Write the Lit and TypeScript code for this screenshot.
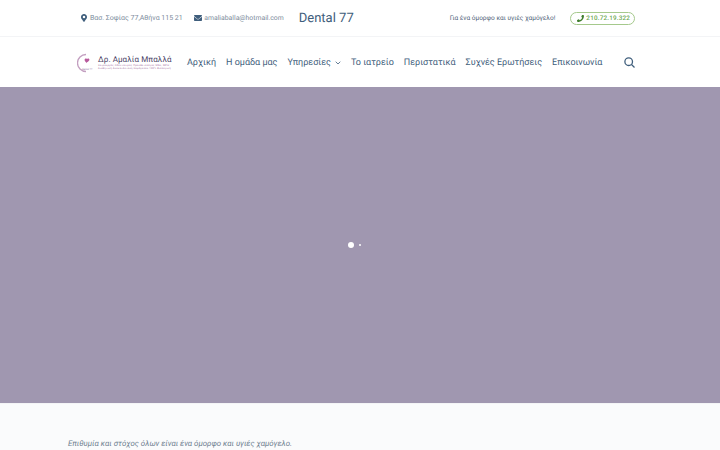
import { LitElement, html, css } from "lit";
import { customElement } from "lit/decorators.js";

@customElement("app-root")
export class AppRoot extends LitElement {
  static styles = css`
    :host { display: block; width: 720px; height: 450px; overflow: hidden; background: #fff; font-family: Roboto, "Noto Sans", sans-serif; color: #3f5e7c; text-rendering: geometricPrecision; }
    .top { height: 37px; box-sizing: border-box; border-bottom: 1px solid #f3f4f6; display: flex; align-items: center; padding: 0 85px 0 81px; }
    .info { display: flex; align-items: center; gap: 3px; font-size: 7px; color: #7d8c9c; white-space: nowrap; }
    .info svg { display: block; color: #3f5e7c; }
    .mail { margin-left: 11px; font-size: 6.85px; gap: 2.5px; }
    .brand { margin-left: 15px; font-size: 13px; color: #3f5e7c; white-space: nowrap; }
    .tagline { margin-left: auto; font-size: 6.5px; color: #4f6478; white-space: nowrap; }
    .phone { margin-left: 15px; display: flex; align-items: center; gap: 2px; height: 11px; padding: 0 4px 0 6px; border: 1px solid #a5c98c; border-radius: 7px; font-size: 6.3px; font-weight: 500; letter-spacing: 0.2px; color: #6aa84f; white-space: nowrap; }
    .nav { height: 50px; box-sizing: border-box; display: flex; align-items: center; padding: 1px 85px 0 77px; }
    .logo { display: flex; align-items: center; gap: 4px; width: 110px; flex: none; }
    .logo-text { display: flex; flex-direction: column; white-space: nowrap; }
    .logo-name { font-size: 8px; line-height: 9px; color: #4a3f66; letter-spacing: 0.1px; }
    .logo-sub { font-size: 2.5px; line-height: 3px; color: #a06a9c; letter-spacing: 0.25px; }
    .menu { display: flex; align-items: center; gap: 10px; font-size: 9px; letter-spacing: 0; white-space: nowrap; }
    .item { display: flex; align-items: center; gap: 4px; }
    .search { margin-left: auto; display: block; color: #3f5e7c; }
    .hero { height: 316px; background: #a097b0; display: flex; align-items: center; justify-content: center; gap: 5px; padding-right: 12px; }
    .dot-a { width: 6px; height: 6px; border-radius: 50%; background: #fff; }
    .dot-b { width: 2px; height: 2px; border-radius: 50%; background: #fff; }
    .below { height: 47px; background: #fafbfc; border-top: 1px solid #f3f4f6; box-sizing: border-box; padding: 30px 0 0 68px; font-size: 7.85px; font-style: italic; line-height: 20px; color: #6f7f90; white-space: nowrap; }
    .logo-caption { font-size: 2.5px; fill: #8a6a96; }
  `;

  render() {
    return html`
      <div class="top">
        <div class="info">
          <svg width="6" height="8" viewBox="0 0 384 512" fill="currentColor"><path d="M172 502C27 291 0 267 0 192 0 86 86 0 192 0s192 86 192 192c0 75-27 99-172 310a24 24 0 0 1-40 0zm20-230a80 80 0 1 0 0-160 80 80 0 0 0 0 160z"/></svg>
          <span>Βασ. Σοφίας 77,Αθήνα 115 21</span>
        </div>
        <div class="info mail">
          <svg width="8" height="6" viewBox="0 0 512 384" fill="currentColor"><path d="M48 0C21 0 0 21 0 48c0 15 7 29 19 38l218 164c11 8 27 8 38 0L493 86c12-9 19-23 19-38 0-27-21-48-48-48H48zM0 112v224c0 27 21 48 48 48h416c27 0 48-21 48-48V112L294 276c-23 17-53 17-76 0L0 112z"/></svg>
          <span>amaliaballa@hotmail.com</span>
        </div>
        <div class="brand">Dental 77</div>
        <div class="tagline">Για ένα όμορφο και υγιές χαμόγελο!</div>
        <div class="phone">
          <svg width="7" height="7" viewBox="0 0 512 512" fill="#3f7d2c"><path d="M493 24 389 0c-11-3-23 3-27 14l-48 112c-4 10-1 21 7 28l60 50c-36 77-99 140-178 178l-50-60c-7-8-18-11-28-7L14 363C3 367-3 379 0 390l24 104c2 10 12 18 23 18 256 0 465-208 465-465 0-11-8-21-19-23z"/></svg>
          <span>210.72.19.322</span>
        </div>
      </div>
      <div class="nav">
        <div class="logo">
          <svg width="17" height="20" viewBox="0 0 17 20" fill="none"><path d="M9 1.500A8.500 8.500 0 0 0 9 18.500" stroke="#c39fc0" stroke-width="1.300"/><path d="M10 10C7 8 7 5.500 9 5.500c.6 0 1 .4 1 .8 0-.4.400-.8 1-.8 2 0 2 2.500-1 3.700z" fill="#b85a9c"/><text class="logo-caption" x="5" y="16.500">dental 77</text></svg>
          <div class="logo-text">
            <span class="logo-name">Δρ. Αμαλία Μπαλλά</span>
            <span class="logo-sub">Χειρουργός Οδοντίατρος Προσθετολόγος MSc, MPH</span>
            <span class="logo-sub">Αισθητική Αποκατάσταση Χαμόγελου 100% Βιολογική</span>
          </div>
        </div>
        <div class="menu">
          <span>Αρχική</span>
          <span>Η ομάδα μας</span>
          <span class="item">Υπηρεσίες
            <svg width="6" height="4" viewBox="0 0 6 4" fill="none" stroke="currentColor" stroke-width="0.8"><path d="M.7.7 3 3 5.300.7"/></svg>
          </span>
          <span>Το ιατρείο</span>
          <span>Περιστατικά</span>
          <span>Συχνές Ερωτήσεις</span>
          <span>Επικοινωνία</span>
        </div>
        <svg class="search" width="11" height="11" viewBox="0 0 11 11" fill="none" stroke="currentColor" stroke-width="1.300"><circle cx="4.700" cy="4.700" r="3.800"/><path d="M7.500 7.500 10.500 10.500"/></svg>
      </div>
      <div class="hero">
        <span class="dot-a"></span>
        <span class="dot-b"></span>
      </div>
      <div class="below">Επιθυμία και στόχος όλων είναι ένα όμορφο και υγιές χαμόγελο.</div>
    `;
  }
}
